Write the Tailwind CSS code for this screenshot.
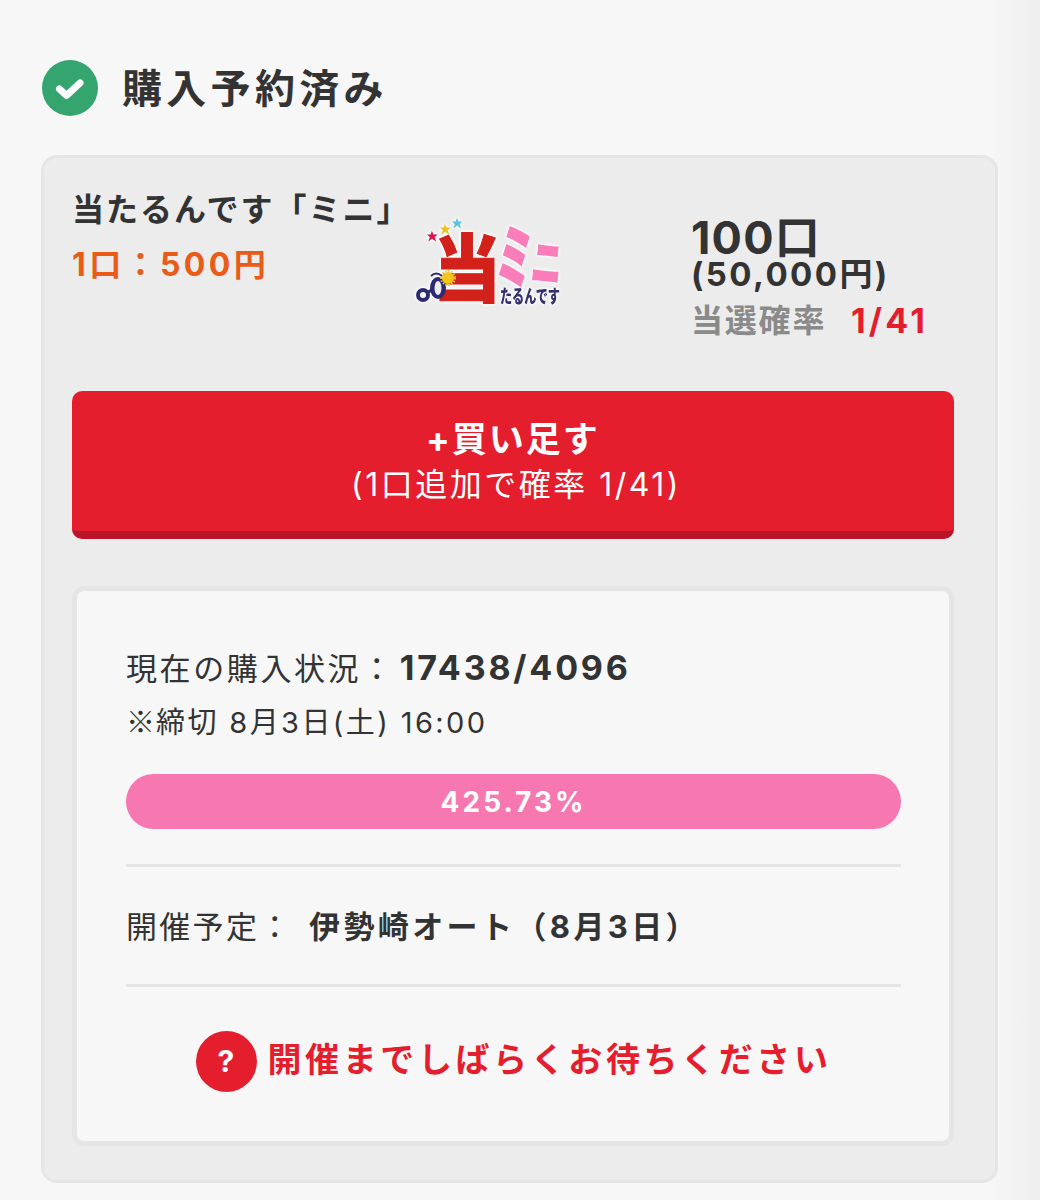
<!DOCTYPE html>
<html lang="ja">
<head>
<meta charset="utf-8">
<script src="https://cdn.jsdelivr.net/npm/@tailwindcss/browser@4"></script>
</head>
<body class="bg-[#f7f7f7] font-['Inter','Noto_Sans_CJK_JP',sans-serif] text-[#333]">
<div class="relative w-[1040px] h-[1200px] overflow-hidden pl-[41px] pr-[42px] pt-[60px]">
  <div class="absolute top-0 right-0 h-full w-[50px] bg-gradient-to-r from-[#f7f7f7] to-[#eeeeee]"></div>
  <div class="relative">
    <div class="flex items-center gap-[24px] h-[56px] pl-[1px]">
      <svg class="w-[56px] h-[56px]" viewBox="0 0 56 56"><circle cx="28" cy="28" r="28" fill="#34a56f"/><path d="M17.500 29 L24.500 35.500 L38 23" fill="none" stroke="#fff" stroke-width="7" stroke-linecap="round" stroke-linejoin="round"/></svg>
      <h1 class="mt-[2px] text-[40px] leading-[56px] font-bold tracking-[4.300px] whitespace-nowrap">購入予約済み</h1>
    </div>
    <div class="mt-[39px] h-[1028px] rounded-[16px] border-[3px] border-[#e5e5e5] bg-[#ececec] pl-[28px] pr-[41px] pt-[32px]">
      <div class="flex h-[168px]">
        <div class="w-[341px] shrink-0">
          <div class="mt-[-2px] text-[32px] leading-[44px] font-bold tracking-[2px] whitespace-nowrap">当たるんです「ミニ」</div>
          <div class="mt-[9px] text-[32px] leading-[48px] font-bold tracking-[3.400px] text-[#e95b17] whitespace-nowrap">1口：500円</div>
        </div>
        <div class="w-[278px] shrink-0 mt-[28px]">
          <svg class="w-[152px] h-[92px] overflow-visible [filter:drop-shadow(0_0_1.500px_white)_drop-shadow(0_0_1.500px_white)]" viewBox="0 0 152 92" font-family="Noto Sans CJK JP" font-weight="900" role="img" aria-label="当たるんです ミニ">
            <text x="20" y="78" font-size="74" fill="#d2211a" stroke="#d2211a" stroke-width="1" textLength="68" lengthAdjust="spacingAndGlyphs">当</text>
            <polygon points="17,20 19.500,25 25,25 21,29 23,35 17,31 12,35 14,29 10,25 15,25" transform="translate(7,-1) scale(.7)" fill="#d9174d"/>
            <polygon points="17,20 19.500,25 25,25 21,29 23,35 17,31 12,35 14,29 10,25 15,25" transform="translate(20,-8) scale(.7)" fill="#f1c21c"/>
            <polygon points="17,20 19.500,25 25,25 21,29 23,35 17,31 12,35 14,29 10,25 15,25" transform="translate(32,-14) scale(.7)" fill="#58c7df"/>
            <text x="84" y="64" font-size="68" fill="#f97db8" stroke="#f97db8" stroke-width="1.500" textLength="36" lengthAdjust="spacingAndGlyphs" transform="rotate(6 103 37)">ミ</text>
            <text x="119" y="64" font-size="52" fill="#f97db8" stroke="#f97db8" stroke-width="1.500" textLength="30" lengthAdjust="spacingAndGlyphs" transform="rotate(6 133 43)">ニ</text>
            <circle cx="10" cy="77" r="5" fill="none" stroke="#2c2a72" stroke-width="4"/>
            <ellipse cx="25" cy="70" rx="8" ry="11" fill="#2c2a72"/>
            <ellipse cx="25" cy="70" rx="3.500" ry="7" fill="#ececec"/>
            <path d="M14 75 L20 71" stroke="#2c2a72" stroke-width="3"/>
            <circle cx="35" cy="60" r="6" fill="#f3c51c"/>
            <circle cx="35" cy="60" r="7" fill="none" stroke="#f3c51c" stroke-width="2" stroke-dasharray="1.500 1.500"/>
            <path d="M18 58 q5 -5 11 0" fill="none" stroke="#2c2a72" stroke-width="2"/>
            <text x="87" y="85" font-size="18" fill="#36306e" textLength="60" lengthAdjust="spacingAndGlyphs">たるんです</text>
          </svg>
        </div>
        <div class="whitespace-nowrap">
          <div class="mt-[24px] text-[45px] leading-[48px] font-bold tracking-[1.200px]">100口</div>
          <div class="mt-[-4px] text-[33px] leading-[32px] font-bold tracking-[2.400px]">(50,000円)</div>
          <div class="mt-[9px] flex text-[32px] leading-[44px] font-bold tracking-[1.800px]">
            <span class="text-[#8a8a8a] w-[160px]">当選確率</span><span class="text-[34px] tracking-[3.200px] text-[#e41e2d]">1/41</span>
          </div>
        </div>
      </div>
      <button class="block w-[882px] h-[148px] mt-[33px] rounded-[10px] bg-[#e41e2d] border-b-[8px] border-[#b9142a] text-white text-center">
        <div class="text-[35px] leading-[44px] font-bold tracking-[2px] mt-[1px]">+買い足す</div>
        <div class="text-[32px] leading-[44px] tracking-[2.500px] mt-[2px] pl-[6px]">(1口追加で確率 1/41)</div>
      </button>
      <div class="mt-[47px] w-[882px] h-[560px] rounded-[12px] border-[5px] border-[#e5e5e5] bg-[#f7f7f7] pl-[49px] pr-[48px] pt-[53px]">
        <div class="text-[31px] leading-[48px] tracking-[2.600px] whitespace-nowrap">現在の購入状況：<b class="ml-[5px] text-[34px] tracking-[2.800px]">17438/4096</b></div>
        <div class="mt-[5px] text-[29px] leading-[44px] tracking-[2.400px] whitespace-nowrap"><span class="font-['Noto_Sans_CJK_JP',sans-serif] tracking-[1px]">※</span>締切 8月3日(土) 16:00</div>
        <div class="mt-[29px] h-[55px] rounded-full bg-[#f777b1] text-white text-center text-[28px] leading-[57px] font-bold tracking-[3px]">425.73%</div>
        <div class="mt-[35px] border-t-[3px] border-[#e5e5e5]"></div>
        <div class="mt-[36px] flex text-[31px] leading-[48px] tracking-[2.300px] whitespace-nowrap">
          <span class="w-[183px]">開催予定：</span><b class="tracking-[3.400px]">伊勢崎オート（8月3日）</b>
        </div>
        <div class="mt-[33px] border-t-[3px] border-[#e5e5e5]"></div>
        <div class="mt-[44px] flex items-center justify-center gap-[11px] text-[#e41e2d] whitespace-nowrap">
          <span class="w-[61px] h-[61px] rounded-full bg-[#e41e2d] text-white flex items-center justify-center text-[30px] font-bold">?</span>
          <span class="mt-[-4px] text-[34px] leading-[60px] font-bold tracking-[3.600px]">開催までしばらくお待ちください</span>
        </div>
      </div>
    </div>
  </div>
</div>
</body>
</html>
